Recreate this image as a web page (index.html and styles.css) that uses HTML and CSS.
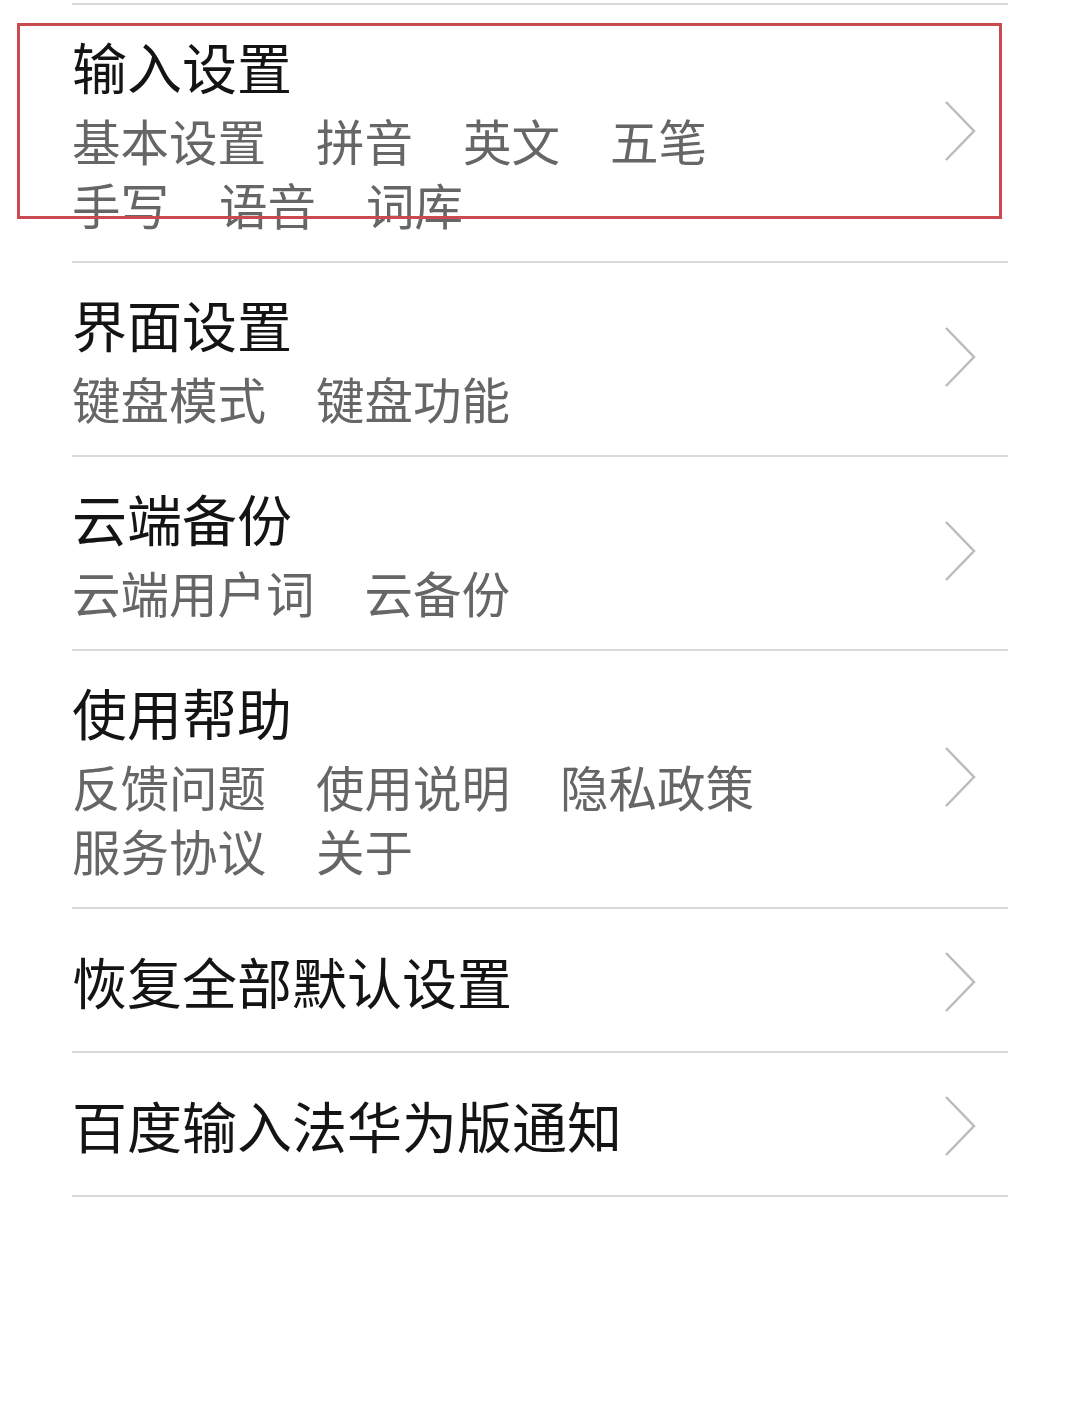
FILE: index.html
```html
<!DOCTYPE html>
<html lang="zh-CN">
<head>
    <meta charset="UTF-8">
    <meta name="viewport" content="width=device-width, initial-scale=1.0">
    <title>设置</title>
    <link rel="stylesheet" href="styles.css">
</head>
<body>
    <div class="settings-list">
        <div class="item">
            <div class="item-text">
                <div class="item-title">输入设置</div>
                <div class="item-subs">
                    <span>基本设置</span>
                    <span>拼音</span>
                    <span>英文</span>
                    <span>五笔</span>
                    <span>手写</span>
                    <span>语音</span>
                    <span>词库</span>
                </div>
            </div>
            <svg class="arrow" viewBox="0 0 32 62"><polyline points="2,2 30,31 2,60"/></svg>
        </div>

        <div class="item">
            <div class="item-text">
                <div class="item-title">界面设置</div>
                <div class="item-subs">
                    <span>键盘模式</span>
                    <span>键盘功能</span>
                </div>
            </div>
            <svg class="arrow" viewBox="0 0 32 62"><polyline points="2,2 30,31 2,60"/></svg>
        </div>

        <div class="item">
            <div class="item-text">
                <div class="item-title">云端备份</div>
                <div class="item-subs">
                    <span>云端用户词</span>
                    <span>云备份</span>
                </div>
            </div>
            <svg class="arrow" viewBox="0 0 32 62"><polyline points="2,2 30,31 2,60"/></svg>
        </div>

        <div class="item">
            <div class="item-text">
                <div class="item-title">使用帮助</div>
                <div class="item-subs">
                    <span>反馈问题</span>
                    <span>使用说明</span>
                    <span>隐私政策</span>
                    <span>服务协议</span>
                    <span>关于</span>
                </div>
            </div>
            <svg class="arrow" viewBox="0 0 32 62"><polyline points="2,2 30,31 2,60"/></svg>
        </div>

        <div class="item single">
            <div class="item-text">
                <div class="item-title">恢复全部默认设置</div>
            </div>
            <svg class="arrow" viewBox="0 0 32 62"><polyline points="2,2 30,31 2,60"/></svg>
        </div>

        <div class="item single">
            <div class="item-text">
                <div class="item-title">百度输入法华为版通知</div>
            </div>
            <svg class="arrow" viewBox="0 0 32 62"><polyline points="2,2 30,31 2,60"/></svg>
        </div>
    </div>

    <div class="highlight"></div>
</body>
</html>
```

FILE: styles.css
```css
* {
    margin: 0;
    padding: 0;
    box-sizing: border-box;
}

body {
    font-family: "Noto Sans CJK SC", "Noto Sans", sans-serif;
    background: #ffffff;
    color: #1a1a1a;
    position: relative;
    min-height: 1410px;
}

.settings-list {
    margin: 3px 72px 0;
    border-top: 2px solid #d9d9d9;
}

.item {
    display: flex;
    align-items: center;
    padding: 17px 32px 25px 0;
    border-bottom: 2px solid #d9d9d9;
}

.item.single {
    padding-top: 28px;
    padding-bottom: 28px;
}

.item-text {
    flex: 1;
    min-width: 0;
}

.item-title {
    font-size: 55px;
    line-height: 86px;
    color: #141414;
}

.item-subs {
    display: flex;
    flex-wrap: wrap;
    column-gap: 50px;
    max-width: 720px;
    font-size: 48.5px;
    line-height: 64px;
    color: #666666;
}

.arrow {
    width: 32px;
    height: 62px;
    flex-shrink: 0;
    margin-top: 4px;
}

.arrow polyline {
    fill: none;
    stroke: #bcbcbc;
    stroke-width: 2.5;
}

/* red annotation frame over the first item */
.highlight {
    position: absolute;
    left: 17px;
    top: 23px;
    width: 985px;
    height: 196px;
    border: 3px solid #c94a4f;
    pointer-events: none;
}
```
